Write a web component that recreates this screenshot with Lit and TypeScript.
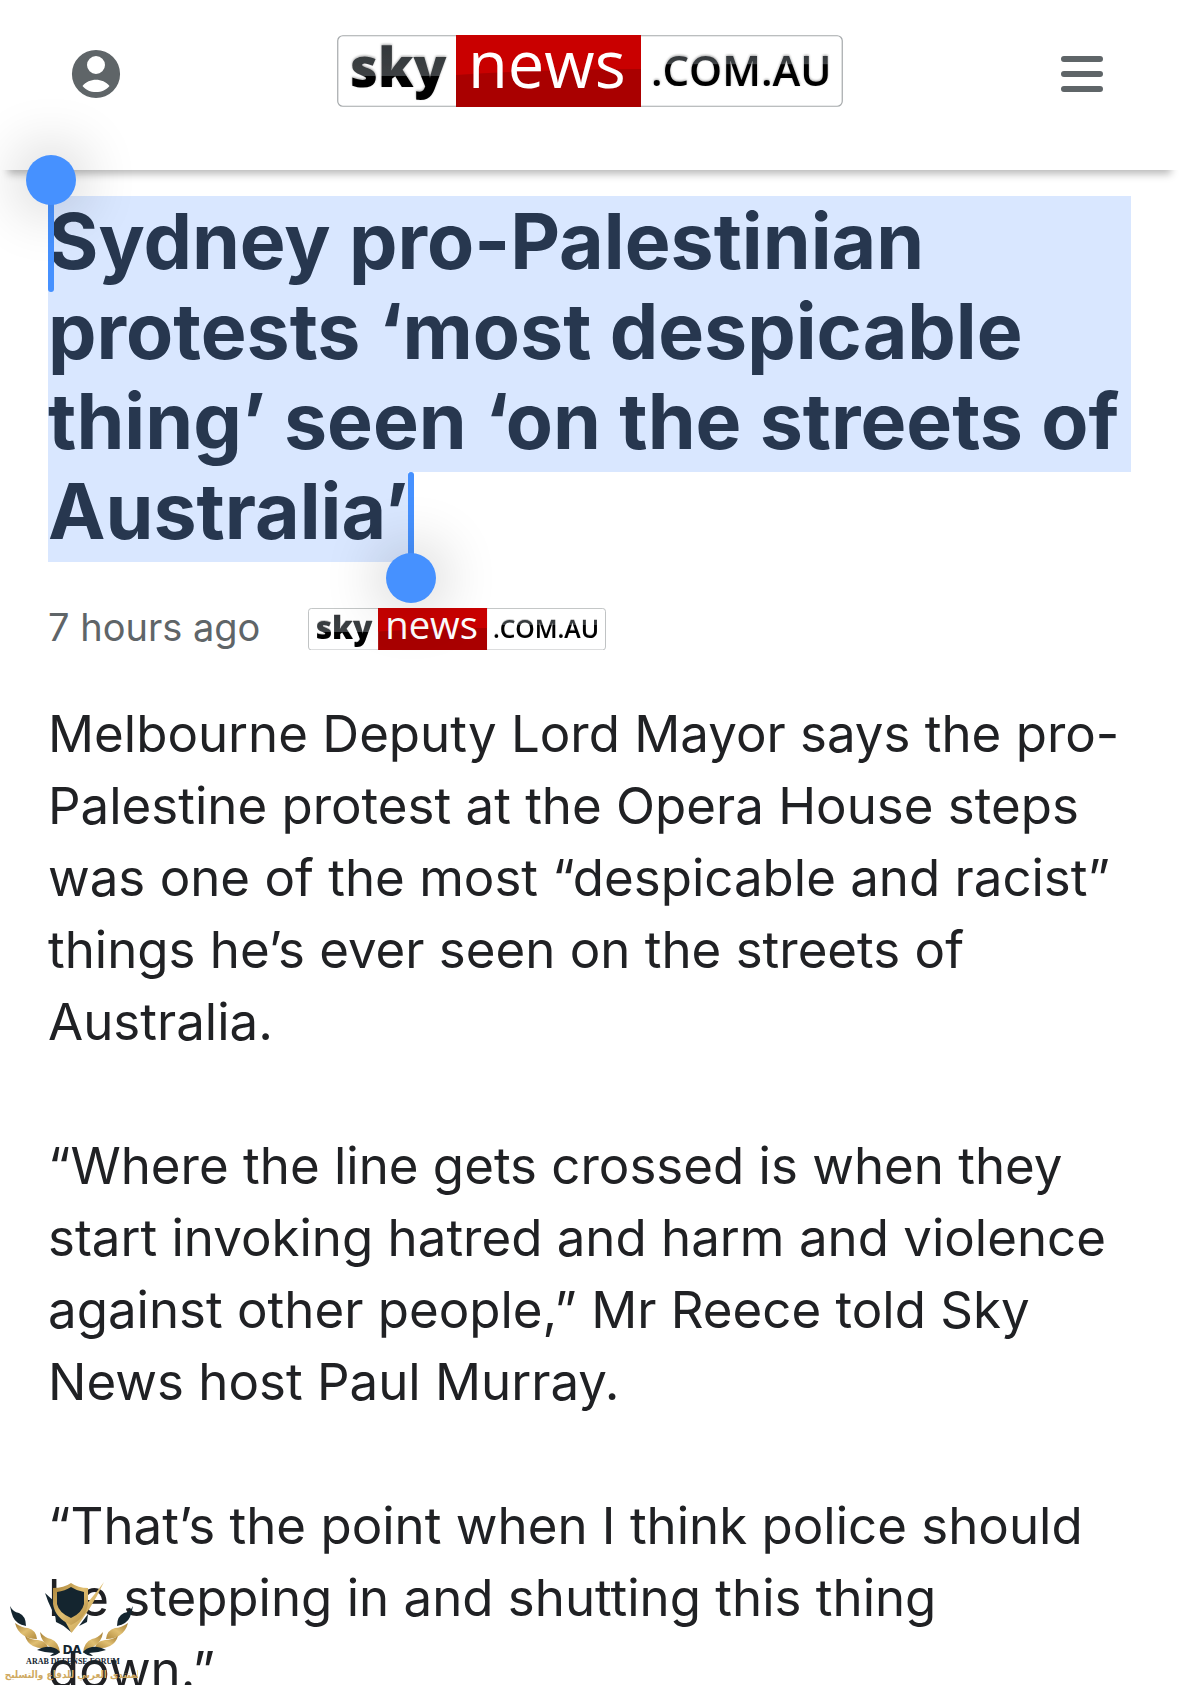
import { LitElement, html, svg, css } from "lit";
import { customElement, property } from "lit/decorators.js";

@customElement("sky-logo")
class SkyLogo extends LitElement {
  static styles = css`
    :host { display: block; }
    svg { display: block; width: 100%; height: auto; }
    .sky { font: 800 54px "Open Sans", sans-serif; }
    .news { font: 400 65px "Open Sans", sans-serif; fill: #fff; }
    .domain { font: 600 42px "Open Sans", sans-serif; }
  `;
  render() {
    return html`<svg viewBox="0 0 506 72" role="img" aria-label="Sky News .com.au">
      <defs>
        <linearGradient id="ink" gradientUnits="userSpaceOnUse" x1="0" y1="8" x2="0" y2="66">
          <stop offset="0" stop-color="#33373a" />
          <stop offset=".56" stop-color="#3d4144" />
          <stop offset=".57" stop-color="#000" />
        </linearGradient>
        <linearGradient id="ink2" gradientUnits="userSpaceOnUse" x1="0" y1="20" x2="0" y2="52">
          <stop offset="0" stop-color="#33373a" />
          <stop offset=".28" stop-color="#3d4144" />
          <stop offset=".3" stop-color="#000" />
        </linearGradient>
        <filter id="soft" x="-10%" y="-20%" width="120%" height="140%">
          <feDropShadow dx="0" dy="-1" stdDeviation="1.2" flood-opacity=".35" />
        </filter>
      </defs>
      <rect x=".75" y=".75" width="504.5" height="70.5" rx="5" fill="#fff" stroke="#a5a9ab" stroke-width="1.2" />
      <rect x="119" y="0" width="185" height="72" fill="#a90000" />
      <path d="M119 0h185v34q-90 0-185 6z" fill="#c90000" />
      <text class="sky" x="13" y="52" fill="url(#ink)" filter="url(#soft)">sky</text>
      <text class="news" x="131" y="53">news</text>
      <text class="domain" x="314" y="51" fill="url(#ink2)" filter="url(#soft)">.COM.AU</text>
    </svg>`;
  }
}

@customElement("selection-handle")
class SelectionHandle extends LitElement {
  @property({ reflect: true }) edge = "start";
  static styles = css`
    :host { position: absolute; width: 6px; background: #4691ff; pointer-events: none; z-index: 3; }
    :host([edge="start"]) { left: 0; top: -16px; bottom: -6px; border-radius: 0 0 3px 3px; }
    :host([edge="end"]) { right: -6px; top: 6px; bottom: 0; border-radius: 3px 3px 0 0; }
    .knob {
      position: absolute; left: -22px; width: 50px; height: 50px; border-radius: 50%;
      background: #4691ff; box-shadow: 0 0 60px 4px rgba(0, 0, 0, 0.24);
    }
    :host([edge="start"]) .knob { top: -25px; }
    :host([edge="end"]) .knob { bottom: -41px; }
  `;
  render() {
    return html`<div class="knob"></div>`;
  }
}

@customElement("forum-watermark")
class ForumWatermark extends LitElement {
  static styles = css`
    :host { display: block; pointer-events: none; }
    svg { display: block; width: 100%; height: auto; }
    .mono { font: 700 12px "DejaVu Sans", sans-serif; }
    .name { font: 700 8px "Liberation Serif", serif; }
    .arabic { font: 700 10px "DejaVu Sans Condensed", "DejaVu Sans", sans-serif; }
  `;
  private wing() {
    return svg`
      <path d="M10 46q3 6 9 7 7 3 7 13-10-2-13-9-2-5-3-11z" fill="#14252f" />
      <path d="M15 63q7 5 13 5 8 2 9 11-9 0-14-4-6-4-8-12z" fill="url(#gold)" />
      <path d="M25 76q6 4 13 4 9 1 10 8-9 1-15-2-6-3-8-10z" fill="url(#gold)" />
      <path d="M40 72q5 6 11 7 8 3 9 14-7-1-10-6-9-5-10-15z" fill="url(#gold)" />
      <path d="M37 90q8-4 14-3 6 1 9 5-4 4-10 4 2-2 4-3-8 0-17-3z" fill="#14252f" />`;
  }
  render() {
    return html`<svg viewBox="0 0 138 125" role="img" aria-label="Arab Defense Forum">
      <defs>
        <linearGradient id="gold" x1="0" y1="0" x2="1" y2="1">
          <stop offset="0" stop-color="#a67f35" />
          <stop offset=".5" stop-color="#e0bf72" />
          <stop offset="1" stop-color="#b18a3e" />
        </linearGradient>
      </defs>
      ${this.wing()}
      <g transform="matrix(-1 0 0 1 143 0)">${this.wing()}</g>
      <path d="M45 33l10 9 14 22 2 8-11-9q-9-12-15-30z" fill="#14252f" />
      <path d="M55 54l9 12-8-4zM88 54l-9 12 8-4z" fill="#14252f" />
      <path d="M104 22Q91 50 71.500 73L60 52l11 9Q91 40 104 22z" fill="url(#gold)" />
      <path d="M53 28q11 0 18-5 7 5 17 5v16q-2 14-17 21-16-7-18-21z" fill="url(#gold)" />
      <path d="M57 32q8-1 14-5 6 4 13 5v12q-2 9-13 14-12-5-14-14z" fill="#14252f" />
      <text class="mono" x="72" y="94" text-anchor="middle" fill="#14252f">DA</text>
      <text class="name" x="73" y="104" text-anchor="middle" fill="#14252f">ARAB DEFENSE FORUM</text>
      <text class="arabic" x="74" y="118" text-anchor="middle" direction="rtl" fill="#cfaa62">المنتدى العربي للدفاع والتسليح</text>
    </svg>`;
  }
}

const HEADLINE = [
  "Sydney pro-Palestinian",
  "protests ‘most despicable",
  "thing’ seen ‘on the streets of",
  "Australia’",
];

const PARAGRAPHS = [
  [
    "Melbourne Deputy Lord Mayor says the pro-",
    "Palestine protest at the Opera House steps",
    "was one of the most “despicable and racist”",
    "things he’s ever seen on the streets of",
    "Australia.",
  ],
  [
    "“Where the line gets crossed is when they",
    "start invoking hatred and harm and violence",
    "against other people,” Mr Reece told Sky",
    "News host Paul Murray.",
  ],
  [
    "“That’s the point when I think police should",
    "be stepping in and shutting this thing",
    "down.”",
  ],
];

@customElement("app-root")
class AppRoot extends LitElement {
  static styles = css`
    :host {
      display: block; position: relative; height: 100vh; overflow: hidden;
      background: #fff; color: #202124; font-family: Inter, "Open Sans", sans-serif;
    }
    .bar {
      display: grid; grid-template-columns: 1fr minmax(0, 506px) 1fr;
      align-items: start; height: 170px; box-sizing: border-box; padding: 35px 69px 0;
      background: #fff; box-shadow: 0 12px 8px -8px rgba(0, 0, 0, 0.28);
    }
    .icon {
      display: block; width: 54px; height: 54px; margin: 12px 0 0; padding: 0;
      border: 0; background: none; color: #5f6568;
    }
    .icon svg { display: block; width: 100%; height: 100%; }
    .menu { justify-self: end; }
    .home { display: block; }
    h1 {
      margin: 26px 48px 0; font-size: 77px; line-height: 90px; font-weight: 700;
      color: #27374f; white-space: nowrap;
    }
    .line { display: block; position: relative; background: #d9e7ff; }
    .line:nth-last-child(2) { padding-bottom: 6px; }
    .line:last-child { width: fit-content; margin-top: -6px; padding-bottom: 6px; }
    .meta {
      display: flex; align-items: center; gap: 48px; margin: 46px 48px 0; height: 42px;
      font-size: 38px; line-height: 38px; color: #5f6568;
    }
    time { margin-bottom: 4px; }
    .source { width: 298px; }
    .story { margin: 48px 48px 0; font-size: 51px; line-height: 72px; white-space: nowrap; }
    .story p { margin: 0 0 72px; }
    .mark { position: absolute; left: 0; bottom: 0; width: 138px; z-index: 4; }
  `;
  render() {
    return html`
      <header class="bar">
        <button class="icon" aria-label="Account">
          <svg viewBox="0 0 24 24" fill="currentColor"><path d="M12 1.300a10.700 10.700 0 1 0 0 21.400 10.700 10.700 0 0 0 0-21.400zm0 2.700a4 4 0 1 1 0 8 4 4 0 0 1 0-8zm0 16c-2.500 0-4.700-1-6-2.700 1.500-1.700 3.700-2.700 6-2.700s4.500 1 6 2.700C16.700 19 14.500 20 12 20z" /></svg>
        </button>
        <a class="home" href="#"><sky-logo></sky-logo></a>
        <button class="icon menu" aria-label="Menu">
          <svg viewBox="0 0 54 54" stroke="currentColor" stroke-width="6" stroke-linecap="round"><path d="M8 12h36M8 27h36M8 42h36" /></svg>
        </button>
      </header>
      <main>
        <h1>${HEADLINE.map(
          (line, i) => html`<span class="line">${line}${i === 0
            ? html`<selection-handle edge="start"></selection-handle>`
            : i === HEADLINE.length - 1
              ? html`<selection-handle edge="end"></selection-handle>`
              : ""}</span>`
        )}</h1>
        <div class="meta"><time>7 hours ago</time><sky-logo class="source"></sky-logo></div>
        <article class="story">
          ${PARAGRAPHS.map((lines) => html`<p>${lines.map((l, i) => (i ? html`<br />${l}` : l))}</p>`)}
        </article>
      </main>
      <forum-watermark class="mark"></forum-watermark>
    `;
  }
}
